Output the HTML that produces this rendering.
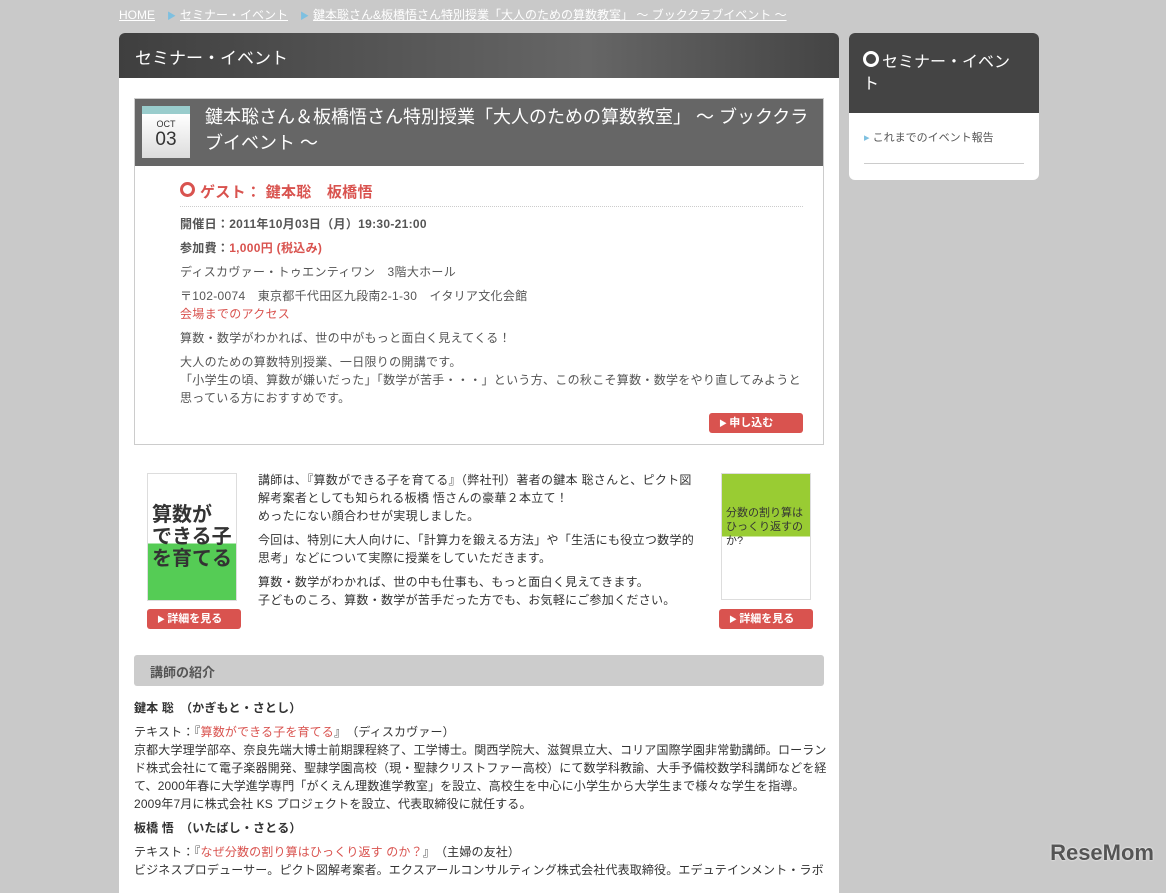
<!DOCTYPE html>
<html><head><meta charset="utf-8"><style>
*{margin:0;padding:0;box-sizing:border-box}
body{width:1166px;height:874px;overflow:hidden;background:#c9c9c9;font-family:"Liberation Sans","Noto Sans CJK JP",sans-serif;color:#444;font-size:12px;position:relative}
.bc{position:absolute;top:6px;left:119px;font-size:12px;color:#fff}
.bc a{color:#fff;text-decoration:underline;margin-right:12px}
.bc .ar{color:#7ec0e0;font-size:9px;margin-right:4px}
.main{position:absolute;left:119px;top:33px;width:720px;height:860px;background:#fff;border-radius:6px 6px 0 0;overflow:hidden}
.mh{height:45px;background:linear-gradient(90deg,#3f3f3f,#666 65%,#444);color:#fff;font-size:17px;padding:11px 16px}
.ev{position:absolute;left:15px;top:65px;width:690px;height:347px;border:1px solid #ccc}
.et{height:67px;background:#666;color:#fff;font-size:18px;line-height:26px;padding:5px 10px 0 70px;position:relative;white-space:nowrap}
.cal{position:absolute;left:7px;top:7px;width:48px;height:52px;background:linear-gradient(#fff,#ddd);border-top:8px solid #9cc;text-align:center;color:#333}
.cal b{display:block;font-size:9px;font-weight:normal;line-height:11px;margin-top:5px}
.cal i{display:block;font-style:normal;font-size:19px;line-height:20px}
.eb{padding:16px 20px 0 45px;line-height:18px;color:#555;letter-spacing:0.3px}
.g{color:#d9534f;font-size:15px;font-weight:bold;border-bottom:1px dotted #ccc;padding-bottom:4px;margin-bottom:8px}
.g:before{content:"";display:inline-block;width:9px;height:9px;border:3px solid #d9534f;border-radius:50%;margin-right:5px;vertical-align:0}
.eb p{margin-bottom:6px}
.red{color:#d9534f}
.btn{display:inline-block;background:#d9534f;color:#fff;font-weight:bold;font-size:11px;border-radius:3px;height:20px;line-height:20px;padding:0 10px;width:94px;text-align:left;letter-spacing:0}
.btn:before{content:"▶ ";font-size:8px}
.book{position:absolute;width:91px}
.mid{position:absolute;left:139px;top:438px;width:440px;line-height:18px;color:#333;letter-spacing:0.3px}
.mid p{margin-bottom:6px}
.sec{position:absolute;left:15px;top:622px;width:690px;height:31px;background:#ccc;border-radius:3px;color:#555;font-weight:bold;font-size:13px;padding:7px 16px}
.bio{position:absolute;left:15px;top:666px;width:700px;line-height:18px;color:#333;letter-spacing:0.15px;white-space:nowrap}
.bio p{margin-bottom:6px}
.side{position:absolute;left:849px;top:33px;width:190px;height:147px;background:#fff;border-radius:6px;overflow:hidden}
.sh{height:80px;background:#444;color:#fff;font-size:16px;padding:18px 14px;line-height:22px}
.sh:before{content:"";display:inline-block;width:10px;height:10px;border:3px solid #fff;border-radius:50%;margin-right:3px}
.sl{margin:16px 15px 0;border-bottom:1px solid #ccc;padding-bottom:18px;font-size:11px;color:#555}
.sl:before{content:"▸ ";color:#7ec0e0}
.logo{position:absolute;right:12px;bottom:8px;font-size:22px;font-weight:bold;color:#555;text-shadow:0 0 2px #fff}
</style></head><body>
<div class="bc"><a>HOME</a><span class="ar">▶</span><a>セミナー・イベント</a><span class="ar">▶</span><a>鍵本聡さん&amp;板橋悟さん特別授業「大人のための算数教室」 ～ ブッククラブイベント ～</a></div>
<div class="main">
<div class="mh">セミナー・イベント</div>
<div class="ev">
<div class="et"><div class="cal"><b>OCT</b><i>03</i></div>鍵本聡さん＆板橋悟さん特別授業「大人のための算数教室」 ～ ブッククラ<br>ブイベント ～</div>
<div class="eb">
<div class="g">ゲスト： 鍵本聡　板橋悟</div>
<p><b>開催日：2011年10月03日（月）19:30-21:00</b></p>
<p><b>参加費：<span class="red">1,000円 (税込み)</span></b></p>
<p>ディスカヴァー・トゥエンティワン　3階大ホール</p>
<p>〒102-0074　東京都千代田区九段南2-1-30　イタリア文化会館<br><span class="red">会場までのアクセス</span></p>
<p>算数・数学がわかれば、世の中がもっと面白く見えてくる！</p>
<p>大人のための算数特別授業、一日限りの開講です。<br>「小学生の頃、算数が嫌いだった」「数学が苦手・・・」という方、この秋こそ算数・数学をやり直してみようと思っている方におすすめです。</p>
<div style="text-align:right"><span class="btn">申し込む</span></div>
</div></div>
<div class="book" style="left:28px;top:440px"><div style="height:128px;margin:0 0 8px 0;width:90px;background:linear-gradient(#fff 0,#fff 55%,#5c5 55%);border:1px solid #ddd;font-size:20px;font-weight:bold;color:#333;line-height:22px;padding:30px 4px 0">算数が<br>できる子<br>を育てる</div><span class="btn">詳細を見る</span></div>
<div class="mid">
<p>講師は、『算数ができる子を育てる』（弊社刊）著者の鍵本 聡さんと、ピクト図解考案者としても知られる板橋 悟さんの豪華２本立て！<br>めったにない顔合わせが実現しました。</p>
<p>今回は、特別に大人向けに、「計算力を鍛える方法」や「生活にも役立つ数学的思考」などについて実際に授業をしていただきます。</p>
<p>算数・数学がわかれば、世の中も仕事も、もっと面白く見えてきます。<br>子どものころ、算数・数学が苦手だった方でも、お気軽にご参加ください。</p>
</div>
<div class="book" style="left:600px;top:440px"><div style="height:127px;margin:0 0 9px 2px;width:90px;background:linear-gradient(#9c3 0,#9c3 50%,#fff 50%);border:1px solid #ddd;font-size:11px;color:#333;line-height:14px;padding:32px 4px 0">分数の割り算は<br>ひっくり返すのか?</div><span class="btn">詳細を見る</span></div>
<div class="sec">講師の紹介</div>
<div class="bio">
<p><b>鍵本 聡　（かぎもと・さとし）</b></p>
<p>テキスト：『<span class="red">算数ができる子を育てる</span>』　（ディスカヴァー）<br>京都大学理学部卒、奈良先端大博士前期課程終了、工学博士。関西学院大、滋賀県立大、コリア国際学園非常勤講師。ローラン<br>ド株式会社にて電子楽器開発、聖隷学園高校（現・聖隷クリストファー高校）にて数学科教諭、大手予備校数学科講師などを経<br>て、2000年春に大学進学専門「がくえん理数進学教室」を設立、高校生を中心に小学生から大学生まで様々な学生を指導。<br>2009年7月に株式会社 KS プロジェクトを設立、代表取締役に就任する。</p>
<p><b>板橋 悟　（いたばし・さとる）</b></p>
<p>テキスト：『<span class="red">なぜ分数の割り算はひっくり返す のか？</span>』　（主婦の友社）<br>ビジネスプロデューサー。ピクト図解考案者。エクスアールコンサルティング株式会社代表取締役。エデュテインメント・ラボ</p>
</div>
</div>
<div class="side"><div class="sh">セミナー・イベント</div><div class="sl">これまでのイベント報告</div></div>
<div class="logo">ReseMom</div>
</body></html>
